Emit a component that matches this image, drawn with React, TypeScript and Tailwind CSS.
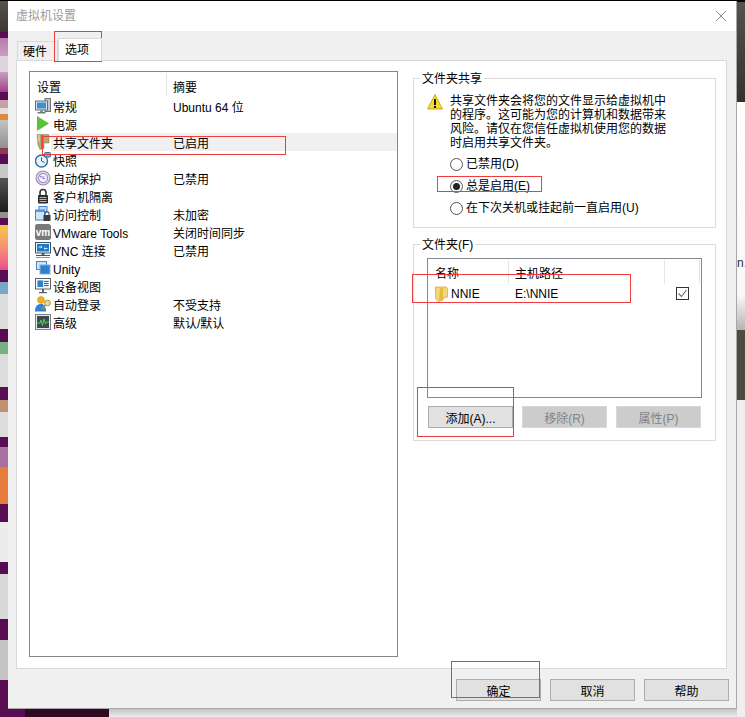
import React from "react";

const FONT = "[font-family:'Liberation_Sans','Noto_Sans_CJK_SC',sans-serif]";

const Svg = ({ children }: { children: React.ReactNode }) => (
  <svg width="16" height="16" viewBox="0 0 16 16" className="block shrink-0">
    {children}
  </svg>
);

const IconGeneral = () => (
  <Svg>
    <rect x="10" y="0.5" width="5.5" height="13" fill="#c4c8cc" stroke="#6b7278" />
    <rect x="0.5" y="3" width="12" height="9" fill="#dbe6ee" stroke="#5e6e7c" />
    <rect x="2" y="4.5" width="9" height="6" fill="#3f8fc9" />
    <rect x="5" y="12" width="3" height="2" fill="#8a9299" />
    <rect x="2.5" y="14" width="8" height="1.5" fill="#6d7780" />
  </Svg>
);
const IconPower = () => (
  <Svg>
    <polygon points="2,0 14,7.5 2,15" fill="#5cc23c" />
  </Svg>
);
const IconShare = () => (
  <Svg>
    <path d="M2 0.5 L14 0.5 L14 9 L9 9 L9 14.5 L5 15.5 L3 11 Z" fill="#b3a86e" stroke="#8f8a58" strokeWidth="0.6" />
    <path d="M6 1 L8.5 1 L8.5 14 L6 15 Z" fill="#83865a" />
    <path d="M3 1 L5 1 L5 9 L3 7 Z" fill="#d2c894" />
  </Svg>
);
const IconSnapshot = () => (
  <Svg>
    <circle cx="6.5" cy="9" r="6" fill="#e8f2fa" stroke="#2f6f9e" strokeWidth="1.4" />
    <path d="M6.5 5.5 V9 L9.5 10.5" stroke="#27567c" strokeWidth="1" fill="none" />
    <rect x="9.5" y="0.5" width="6" height="4.5" rx="1" fill="#6fb0dc" stroke="#2f6f9e" />
  </Svg>
);
const IconProtect = () => (
  <Svg>
    <circle cx="8" cy="8" r="7" fill="#e4e0ee" stroke="#8f8c9c" strokeWidth="1.1" />
    <circle cx="8" cy="8" r="4.6" fill="#f4f2fa" stroke="#a58fd8" strokeWidth="1.2" />
    <path d="M4.5 6.5 L6.5 5.5 L6.5 8 Z" fill="#8f6fd0" />
    <path d="M8 6 V8.5 H10" stroke="#8f6fd0" strokeWidth="1" fill="none" />
  </Svg>
);
const IconLock = () => (
  <Svg>
    <path d="M5 7 V4.5 a3 3 0 0 1 6 0 V7" fill="none" stroke="#333" strokeWidth="1.6" />
    <rect x="3" y="7" width="10" height="8.5" rx="1" fill="#2c2c2c" />
    <rect x="4.5" y="9" width="7" height="1" fill="#b8b8b8" />
    <rect x="4.5" y="11" width="7" height="1" fill="#b8b8b8" />
    <rect x="4.5" y="13" width="7" height="1" fill="#b8b8b8" />
  </Svg>
);
const IconAccess = () => (
  <Svg>
    <rect x="4" y="0.5" width="8" height="6" fill="#bcdcf6" stroke="#3f88cc" />
    <rect x="0.5" y="4" width="9" height="10" fill="#cfe6f9" stroke="#3f88cc" />
    <rect x="0.5" y="4" width="9" height="2" fill="#4f9ade" />
    <path d="M10 9 V7.5 a2 2 0 0 1 4 0 V9" fill="none" stroke="#555" strokeWidth="1.2" />
    <rect x="8.5" y="9" width="7" height="6" rx="0.5" fill="#3b3b3b" />
  </Svg>
);
const IconVm = () => (
  <Svg>
    <rect x="0" y="0" width="16" height="16" rx="2.5" fill="#7a7a7a" />
    <text x="8" y="11.5" textAnchor="middle" fontSize="10" fontWeight="700" fill="#fff" fontFamily="'Liberation Sans',sans-serif">vm</text>
  </Svg>
);
const IconVnc = () => (
  <Svg>
    <rect x="0.5" y="0.5" width="15" height="10.5" fill="#eef3f8" stroke="#39536c" />
    <rect x="2" y="2" width="12" height="7.5" fill="#1f78c8" />
    <path d="M3.5 5 H7 M7 5 L5.8 4 M7 5 L5.8 6 M12.5 6.5 H9 M9 6.5 L10.2 5.5 M9 6.5 L10.2 7.5" stroke="#fff" strokeWidth="0.8" fill="none" />
    <rect x="6.5" y="11" width="3" height="2" fill="#4d6276" />
    <rect x="1" y="13" width="14" height="1" fill="#39536c" />
    <rect x="1" y="15" width="14" height="1" fill="#8896a3" />
  </Svg>
);
const IconUnity = () => (
  <Svg>
    <rect x="1.5" y="1.5" width="10" height="8" fill="#cfe3f6" stroke="#3f88cc" />
    <rect x="5" y="5" width="10" height="9" fill="#2f7fc9" stroke="#7fb2e0" />
  </Svg>
);
const IconDevice = () => (
  <Svg>
    <rect x="0.5" y="0.5" width="15" height="10.5" fill="#fff" stroke="#5a6268" />
    <rect x="2" y="2" width="12" height="7.5" fill="#dbe8f5" />
    <rect x="2.5" y="2.5" width="5.5" height="6.5" fill="#2f7fc9" />
    <rect x="9" y="3" width="4.5" height="1" fill="#4a6a8a" />
    <rect x="9" y="5" width="4.5" height="1" fill="#4a6a8a" />
    <rect x="9" y="7" width="4.5" height="1" fill="#4a6a8a" />
    <rect x="7" y="11" width="2" height="3" fill="#5a6268" />
    <rect x="4" y="14" width="8" height="1.2" fill="#5a6268" />
  </Svg>
);
const IconLogin = () => (
  <Svg>
    <circle cx="6" cy="4" r="3.4" fill="#f2b01e" stroke="#c98a10" strokeWidth="0.6" />
    <path d="M0 15.5 C0 10 2.5 8 6 8 C9.5 8 11 10.5 11 15.5 Z" fill="#2f80d8" />
    <circle cx="12.5" cy="7" r="2.8" fill="#e8d9a0" stroke="#a8903c" />
    <path d="M10.5 9 L6.5 13 M8 12 L9.5 13.5" stroke="#a8903c" strokeWidth="1.4" fill="none" />
  </Svg>
);
const IconAdvanced = () => (
  <Svg>
    <rect x="0.5" y="0.5" width="15" height="15" fill="#e6e9ec" stroke="#7a8288" />
    <rect x="2" y="2" width="12" height="12" fill="#3d4a50" />
    <path d="M2 9 H5 L6 6 L7.5 11.5 L9 5 L10.5 10 L11.5 8 H14" stroke="#55d04a" strokeWidth="1" fill="none" />
  </Svg>
);

const rows: { icon: React.ReactNode; name: string; summary: string; selected?: boolean }[] = [
  { icon: <IconGeneral />, name: "常规", summary: "Ubuntu 64 位" },
  { icon: <IconPower />, name: "电源", summary: "" },
  { icon: <IconShare />, name: "共享文件夹", summary: "已启用", selected: true },
  { icon: <IconSnapshot />, name: "快照", summary: "" },
  { icon: <IconProtect />, name: "自动保护", summary: "已禁用" },
  { icon: <IconLock />, name: "客户机隔离", summary: "" },
  { icon: <IconAccess />, name: "访问控制", summary: "未加密" },
  { icon: <IconVm />, name: "VMware Tools", summary: "关闭时间同步" },
  { icon: <IconVnc />, name: "VNC 连接", summary: "已禁用" },
  { icon: <IconUnity />, name: "Unity", summary: "" },
  { icon: <IconDevice />, name: "设备视图", summary: "" },
  { icon: <IconLogin />, name: "自动登录", summary: "不受支持" },
  { icon: <IconAdvanced />, name: "高级", summary: "默认/默认" },
];

const leftStrip = [
  "h-[1px] bg-[#000000]",
  "h-[31px] bg-gradient-to-b from-[#55534a] to-[#3a3830]",
  "h-[6px] bg-[#5a0c52]",
  "h-[18px] bg-gradient-to-b from-[#b878ac] to-[#c8a0c0]",
  "h-[16px] bg-[#e0d4dc]",
  "h-[20px] bg-gradient-to-b from-[#c8a0c0] to-[#a03c8c]",
  "h-[8px] bg-[#5a0c52]",
  "h-[8px] bg-[#c8a0a8]",
  "h-[6px] bg-[#e0e0e0]",
  "h-[6px] bg-[#e08a3c]",
  "h-[28px] bg-gradient-to-b from-[#c4c4c4] to-[#909090]",
  "h-[6px] bg-[#8a3c4c]",
  "h-[10px] bg-[#5a0c52]",
  "h-[14px] bg-[#c8c8c8]",
  "h-[34px] bg-gradient-to-b from-[#555555] to-[#1c1c1c]",
  "h-[6px] bg-[#909090]",
  "h-[7px] bg-[#5a0c52]",
  "h-[45px] bg-gradient-to-b from-[#f4c93c] to-[#ee4a8c]",
  "h-[12px] bg-[#5a0c52]",
  "h-[12px] bg-[#78a8c8]",
  "h-[35px] bg-[#dcdcdc]",
  "h-[13px] bg-[#5a0c52]",
  "h-[12px] bg-[#78b080]",
  "h-[33px] bg-[#dcdcdc]",
  "h-[13px] bg-[#5a0c52]",
  "h-[12px] bg-[#c09070]",
  "h-[25px] bg-[#dcdcdc]",
  "h-[10px] bg-[#5a0c52]",
  "h-[20px] bg-[#a870a0]",
  "h-[37px] bg-[#e87c3c]",
  "h-[18px] bg-[#5a0c52]",
  "h-[40px] bg-[#ececec]",
  "h-[12px] bg-[#5a0c52]",
  "h-[45px] bg-[#d8d8d8]",
  "h-[21px] bg-[#5a0c52]",
  "h-[40px] bg-[#c4c4c4]",
  "flex-1 bg-[#5a0c52]",
];

const Radio = ({ checked, label, hotkey, className }: { checked?: boolean; label: string; hotkey: string; className: string }) => (
  <div className={`flex items-center h-[14px] ${className}`}>
    <span className="w-[13px] h-[13px] rounded-full border border-[#555] bg-white flex items-center justify-center shrink-0">
      {checked && <span className="w-[7px] h-[7px] rounded-full bg-[#222]" />}
    </span>
    <span className="ml-[3px] whitespace-nowrap">
      {label}({hotkey})
    </span>
  </div>
);

const Group = ({ title, className, children }: { title: string; className: string; children: React.ReactNode }) => (
  <div className={`relative border border-[#dcdcdc] ${className}`}>
    <span className="absolute left-[6px] top-[-7px] bg-white px-[2px] leading-[14px]">{title}</span>
    {children}
  </div>
);

const Btn = ({ label, disabled }: { label: string; disabled?: boolean }) => (
  <div
    className={
      disabled
        ? "w-[85px] h-[22px] pt-[3px] flex items-center justify-center bg-[#cccccc] border border-[#d8d8d8] text-[#838383]"
        : "w-[85px] h-[22px] pt-[3px] flex items-center justify-center bg-[#e1e1e1] border border-[#adadad]"
    }
  >
    {label}
  </div>
);

const Mark = ({ className }: { className: string }) => (
  <div className={`absolute border border-[#f03c3c] ${className}`} />
);

export default function App() {
  return (
    <div className={`relative w-[745px] h-[717px] overflow-hidden flex text-[12px] text-black ${FONT}`}>
      <div className="w-2 flex flex-col">
        {leftStrip.map((c, i) => (
          <div key={i} className={c} />
        ))}
      </div>
      <div className="flex-1 flex flex-col justify-end bg-black">
        <div className="h-2 flex">
          <div className="w-[17px] bg-[#5a0c52]" />
          <div className="w-[84px] bg-[#2c0a24]" />
          <div className="flex-1 bg-gradient-to-b from-[#c4c4c4] to-[#ececec]" />
        </div>
      </div>
      <div className="w-2 flex flex-col overflow-hidden">
        <div className="h-[2px] bg-black shrink-0" />
        <div className="h-[100px] bg-gradient-to-b from-[#55534a] to-[#33332c] shrink-0" />
        <div className="h-[228px] bg-gradient-to-b from-[#ffffff] via-[#f8f8f8] via-[85%] to-[#b4b4b4] shrink-0 leading-[14px] pt-[154px] whitespace-nowrap text-[#333]">
          n.
        </div>
        <div className="h-[70px] bg-[#4c4b42] shrink-0" />
        <div className="flex-1 bg-[#efefef]" />
      </div>

      {/* dialog window */}
      <div className="absolute left-2 top-[1px] w-[729px] h-[708px] bg-[#f0f0f0] border-r border-b border-[#a8a8a8] flex flex-col">
        <div className="h-[30px] bg-white flex items-center justify-between pl-2 pr-[9px] shrink-0">
          <span className="text-[#9b9b9b]">虚拟机设置</span>
          <svg width="12" height="12" viewBox="0 0 12 12" className="block">
            <path d="M1 1 L11 11 M11 1 L1 11" stroke="#8a8a8a" strokeWidth="1" fill="none" />
          </svg>
        </div>

        <div className="h-[29px] flex items-end pl-[9px] shrink-0">
          <div className="w-[41px] h-[19px] pl-[5px] pt-[2px] bg-[#f0f0f0] border border-b-0 border-[#d9d9d9] flex items-center">
            硬件
          </div>
          <div className="w-[44px] h-[23px] pl-[6px] mb-[-1px] z-10 bg-white border border-b-0 border-[#d9d9d9] flex items-center">
            选项
          </div>
        </div>

        <div className="ml-2 mr-[9px] h-[609px] bg-white border border-[#d9d9d9] flex pl-3 pt-[10px] pb-[11px] shrink-0">
          <div className="w-[369px] border border-[#828790] flex flex-col shrink-0">
            <div className="h-[25px] flex items-start pt-[1px]">
              <span className="ml-[7px] w-[129px] mt-[8px] leading-[14px]">设置</span>
              <span className="w-px h-[23px] bg-[#e4e4e4]" />
              <span className="ml-[6px] mt-[8px] leading-[14px]">摘要</span>
            </div>
            {rows.map((r) => (
              <div key={r.name} className="h-[18px] flex items-center pl-[5px]">
                {r.icon}
                <div className={`flex-1 h-[18px] flex items-center pl-[2px] pt-[4px] ${r.selected ? "bg-[#f0f0f0]" : ""}`}>
                  <span className="w-[120px] whitespace-nowrap">{r.name}</span>
                  <span className="whitespace-nowrap">{r.summary}</span>
                </div>
              </div>
            ))}
          </div>

          <div className="ml-[15px] w-[303px] pt-[7px] flex flex-col gap-4 shrink-0">
            <Group title="文件夹共享" className="h-[150px]">
              <div className="flex pl-[13px] pt-[15px]">
                <svg width="16" height="16" viewBox="0 0 16 16" className="block shrink-0">
                  <path d="M8 0.5 L15.5 15 H0.5 Z" fill="#f8d930" stroke="#b89a10" strokeWidth="0.8" strokeLinejoin="round" />
                  <rect x="7" y="5" width="2" height="6" fill="#111" />
                  <rect x="7" y="12" width="2" height="2" fill="#111" />
                </svg>
                <p className="ml-[7px] leading-[14px] whitespace-nowrap">
                  共享文件夹会将您的文件显示给虚拟机中
                  <br />
                  的程序。这可能为您的计算机和数据带来
                  <br />
                  风险。请仅在您信任虚拟机使用您的数据
                  <br />
                  时启用共享文件夹。
                </p>
              </div>
              <Radio label="已禁用" hotkey="D" className="ml-[36px] mt-[7px]" />
              <Radio checked label="总是启用" hotkey="E" className="ml-[36px] mt-[8px]" />
              <Radio label="在下次关机或挂起前一直启用" hotkey="U" className="ml-[36px] mt-[8px]" />
            </Group>

            <Group title="文件夹(F)" className="h-[197px]">
              <div className="ml-[13px] mt-[13px] w-[275px] h-[140px] border border-[#828790]">
                <div className="h-[25px] flex items-start pt-[1px]">
                  <span className="ml-[7px] w-[73px] mt-[7px] leading-[14px]">名称</span>
                  <span className="w-px h-[24px] bg-[#e4e4e4]" />
                  <span className="ml-[6px] w-[149px] mt-[7px] leading-[14px]">主机路径</span>
                  <span className="w-px h-[24px] bg-[#e4e4e4]" />
                  <span className="ml-[34px] w-px h-[24px] bg-[#e4e4e4]" />
                </div>
                <div className="h-[18px] flex items-center pt-[2px]">
                  <svg width="13" height="16" viewBox="0 0 13 16" className="block ml-[7px] shrink-0">
                    <path d="M0.5 1 L11.5 1 L12.5 3 L12.5 11 L8 12 L8 14 L3 15.5 L0.5 12 Z" fill="#f3d67a" stroke="#c8a23c" strokeWidth="0.7" />
                    <path d="M5 2.5 L8 2 L8 14 L4 15.5 Z" fill="#e8b93c" />
                  </svg>
                  <span className="ml-[3px] w-[64px]">NNIE</span>
                  <span className="w-[161px]">E:\NNIE</span>
                  <span className="w-[13px] h-[13px] mt-[-2px] border border-[#333] bg-white flex items-center justify-center shrink-0">
                    <svg width="11" height="11" viewBox="0 0 11 11" className="block">
                      <path d="M1.5 5.5 L4.5 8.5 L9.5 2" stroke="#666" strokeWidth="1.1" fill="none" />
                    </svg>
                  </span>
                </div>
              </div>
              <div className="ml-[14px] mt-[8px] flex gap-[9px]">
                <Btn label="添加(A)..." />
                <Btn label="移除(R)" disabled />
                <Btn label="属性(P)" disabled />
              </div>
            </Group>
          </div>
        </div>

        <div className="flex-1 flex justify-end gap-[9px] pt-[10px] pr-[7px]">
          <Btn label="确定" />
          <Btn label="取消" />
          <Btn label="帮助" />
        </div>
      </div>

      {/* red annotations */}
      <Mark className="left-[54px] top-[31px] w-[48px] h-[31px]" />
      <Mark className="left-[42px] top-[136px] w-[244px] h-[19px]" />
      <Mark className="left-[437px] top-[176px] w-[105px] h-[16px]" />
      <Mark className="left-[412px] top-[274px] w-[219px] h-[29px]" />
      <Mark className="left-[417px] top-[387px] w-[97px] h-[50px]" />
      <Mark className="left-[451px] top-[661px] w-[89px] h-[37px]" />
    </div>
  );
}
